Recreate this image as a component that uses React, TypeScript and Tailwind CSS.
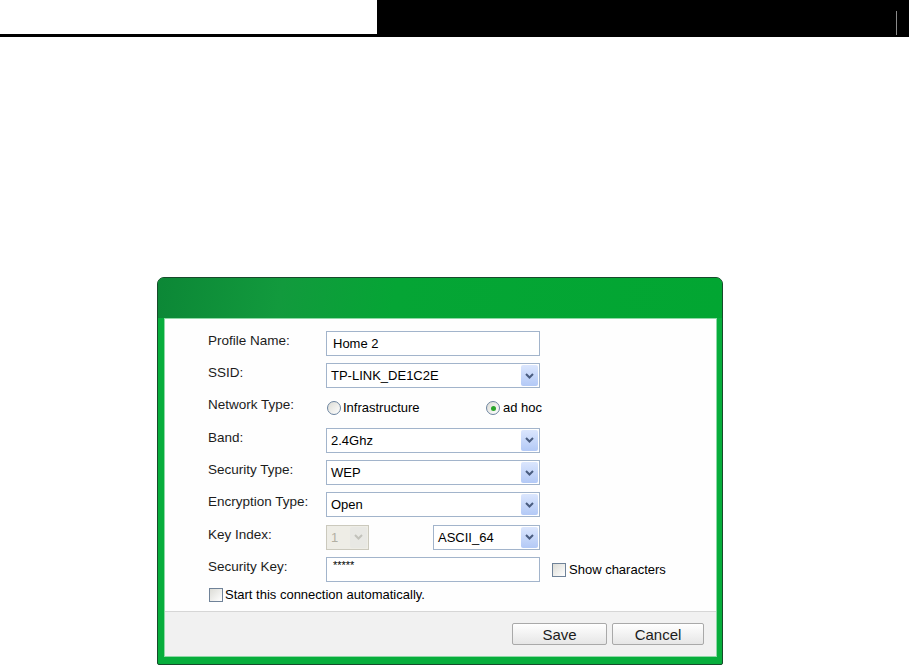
import React from "react";

const Chevron = ({ color }: { color: string }) => (
  <svg width="9" height="6" viewBox="0 0 9 6">
    <path d="M1 1l3.5 3.5L8 1" fill="none" stroke={color} strokeWidth="2" />
  </svg>
);

const Select = ({
  value,
  width,
  disabled,
}: {
  value: string;
  width: string;
  disabled?: boolean;
}) => (
  <div
    className={`flex h-[25px] items-center border ${width} ${
      disabled
        ? "border-[#cbc9bd] bg-[#eeede6] text-[#b2b0a3]"
        : "border-[#a2b4cb] bg-white text-black"
    }`}
  >
    <span className="flex-1 pl-[4px] text-[13px]">{value}</span>
    <span
      className={`mr-[1px] flex h-[21px] w-[17px] items-center justify-center rounded-[2px] ${
        disabled
          ? "bg-[#e8e8e4]"
          : "bg-gradient-to-b from-[#dbe6fd] to-[#b3c9f6]"
      }`}
    >
      <Chevron color={disabled ? "#c2c2bb" : "#4a5d80"} />
    </span>
  </div>
);

const Radio = ({ checked }: { checked?: boolean }) => (
  <span className="flex h-[14px] w-[14px] items-center justify-center rounded-full border border-[#6c84a0] bg-gradient-to-br from-[#dcdcd6] to-white">
    {checked && <span className="h-[5px] w-[5px] rounded-full bg-[#2aa52a]" />}
  </span>
);

const Checkbox = () => (
  <span className="h-[14px] w-[14px] border border-[#6f8298] bg-gradient-to-br from-[#dcdcd6] to-white" />
);

const Label = ({ text }: { text: string }) => (
  <p className="w-[118px] pb-[5px] text-[13.5px] text-[#1c1c1c]">{text}</p>
);

const Row = ({ children }: { children: React.ReactNode }) => (
  <div className="flex h-[25px] items-center">{children}</div>
);

const Button = ({ text, width }: { text: string; width: string }) => (
  <button
    className={`h-[22px] rounded-[2px] border border-[#a9a9a9] bg-gradient-to-b from-white to-[#e6e6e6] text-[15px] leading-none text-[#1c1c1c] ${width}`}
  >
    {text}
  </button>
);

export default function App() {
  return (
    <div className="min-h-[667px] bg-white font-['Liberation_Sans',Arial,sans-serif]">
      <div className="flex h-[37px]">
        <div className="w-[377px] border-b-[3px] border-black" />
        <div className="flex flex-1 items-end justify-end bg-black pb-[2px] pr-[12px]">
          <div className="h-[24px] w-px bg-[#8a8a8a]" />
        </div>
      </div>

      <div className="ml-[157px] mt-[240px] flex h-[388px] w-[566px] flex-col rounded-t-[7px] rounded-b-[2px] border border-[#174a2b] bg-[#07ae3c]">
        <div className="h-[40px] rounded-t-[6px] bg-[linear-gradient(100deg,#0c8736_0%,#129a3d_22%,#05a535_42%,#02a632_100%)]" />
        <div className="flex flex-1 pb-[7px] pl-[6px] pr-[5px]">
          <div className="flex flex-1 flex-col border border-[#8fd9a6] bg-[#fefefe]">
            <div className="flex h-[292px] flex-col gap-[7.3px] pl-[43px] pt-[12px]">
              <Row>
                <Label text="Profile Name:" />
                <div className="flex h-[25px] w-[214px] items-center border border-[#a2b4cb] bg-white pl-[6px] text-[13px]">
                  Home 2
                </div>
              </Row>
              <Row>
                <Label text="SSID:" />
                <Select value="TP-LINK_DE1C2E" width="w-[214px]" />
              </Row>
              <Row>
                <Label text="Network Type:" />
                <div className="flex w-[160px] items-center gap-[2px] pl-[1px] text-[13px]">
                  <Radio />
                  <span>Infrastructure</span>
                </div>
                <div className="flex items-center gap-[3px] text-[13px]">
                  <Radio checked />
                  <span>ad hoc</span>
                </div>
              </Row>
              <Row>
                <Label text="Band:" />
                <Select value="2.4Ghz" width="w-[214px]" />
              </Row>
              <Row>
                <Label text="Security Type:" />
                <Select value="WEP" width="w-[214px]" />
              </Row>
              <Row>
                <Label text="Encryption Type:" />
                <Select value="Open" width="w-[214px]" />
              </Row>
              <Row>
                <Label text="Key Index:" />
                <Select value="1" width="w-[43px]" disabled />
                <div className="ml-[64px]">
                  <Select value="ASCII_64" width="w-[107px]" />
                </div>
              </Row>
              <Row>
                <Label text="Security Key:" />
                <div className="flex h-[25px] w-[214px] items-start border border-[#a2b4cb] bg-white pl-[6px] pt-[2px] text-[11px] leading-none">
                  *****
                </div>
                <div className="ml-[12px] flex items-center gap-[3px] text-[13px]">
                  <Checkbox />
                  <span>Show characters</span>
                </div>
              </Row>
              <div className="mt-[-4px] flex items-center gap-[2px] pl-[1px] text-[13px]">
                <Checkbox />
                <span>Start this connection automatically.</span>
              </div>
            </div>
            <div className="flex flex-1 items-start justify-end gap-[5px] border-t border-[#d6d6d6] bg-[#f1f1f1] pr-[12px] pt-[11px]">
              <Button text="Save" width="w-[95px]" />
              <Button text="Cancel" width="w-[92px]" />
            </div>
          </div>
        </div>
      </div>
    </div>
  );
}
